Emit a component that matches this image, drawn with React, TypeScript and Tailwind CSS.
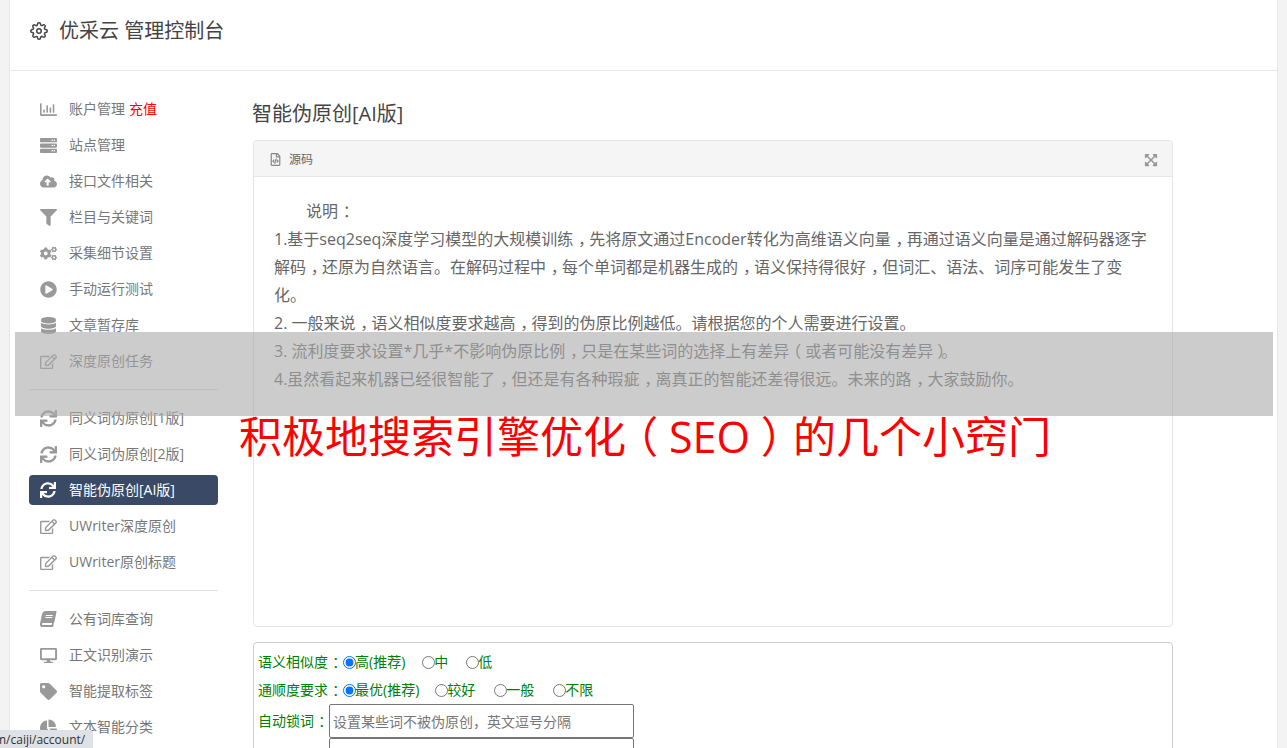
import { FiSettings } from 'react-icons/fi';
import {
    FaBook,
    FaChartPie,
    FaCloudUploadAlt,
    FaCogs,
    FaDatabase,
    FaDesktop,
    FaExpandArrowsAlt,
    FaFilter,
    FaPlayCircle,
    FaRegChartBar,
    FaRegEdit,
    FaRegFileCode,
    FaServer,
    FaSync,
    FaTag,
} from 'react-icons/fa';

type Item = {
    icon: React.ComponentType<{ className?: string }>;
    label: string;
    extra?: string;
    active?: boolean;
    slant?: boolean;
};

const groupOne: Item[] = [
    { icon: FaRegChartBar, label: '账户管理', extra: '充值' },
    { icon: FaServer, label: '站点管理' },
    { icon: FaCloudUploadAlt, label: '接口文件相关' },
    { icon: FaFilter, label: '栏目与关键词' },
    { icon: FaCogs, label: '采集细节设置' },
    { icon: FaPlayCircle, label: '手动运行测试' },
    { icon: FaDatabase, label: '文章暂存库' },
    { icon: FaRegEdit, label: '深度原创任务' },
];

const groupTwo: Item[] = [
    { icon: FaSync, label: '同义词伪原创[1版]' },
    { icon: FaSync, label: '同义词伪原创[2版]' },
    { icon: FaSync, label: '智能伪原创[AI版]', active: true },
    { icon: FaRegEdit, label: 'UWriter深度原创' },
    { icon: FaRegEdit, label: 'UWriter原创标题' },
];

const groupThree: Item[] = [
    { icon: FaBook, label: '公有词库查询', slant: true },
    { icon: FaDesktop, label: '正文识别演示' },
    { icon: FaTag, label: '智能提取标签' },
    { icon: FaChartPie, label: '文本智能分类' },
];

// Noto pushes these marks to one side of the em box, the reference centres them
function Cn({ text }: { text: string }) {
    return (
        <>
            {text.split(/([，：（）])/).map((part, i) => {
                if (part === '，' || part === '：') {
                    return (
                        <span key={i} className="ml-[0.3em] mr-[-0.3em]">
                            {part}
                        </span>
                    );
                }
                if (part === '（') {
                    return (
                        <span key={i} className="ml-[-0.25em] mr-[0.25em]">
                            {part}
                        </span>
                    );
                }
                if (part === '）') {
                    return (
                        <span key={i} className="ml-[0.25em] mr-[-0.25em]">
                            {part}
                        </span>
                    );
                }
                return part;
            })}
        </>
    );
}

function NavItem({ item }: { item: Item }) {
    const Icon = item.icon;
    if (item.active) {
        return (
            <div className="my-[3px] flex h-[30px] items-center rounded-[4px] bg-[#3a4a66] pl-[11px] text-white">
                <span className="flex w-[29px] shrink-0 justify-start">
                    <Icon className="h-[16px] w-[16px]" />
                </span>
                <span>{item.label}</span>
            </div>
        );
    }
    return (
        <div className="flex h-[36px] items-center pl-[11px] text-[#777]">
            <span className="flex w-[29px] shrink-0 justify-start">
                <Icon className={item.slant ? 'h-[16px] w-[16px] -skew-x-12 text-[#999]' : 'h-[17px] w-[17px] text-[#999]'} />
            </span>
            <span>{item.label}</span>
            {item.extra && <span className="ml-1 text-[#f00]">{item.extra}</span>}
        </div>
    );
}

function Radio({ label, checked, name, gap }: { label: string; checked?: boolean; name: string; gap: string }) {
    return (
        <label className={`inline-flex items-center ${gap}`}>
            <input type="radio" name={name} defaultChecked={checked} className="m-0 mr-[-1px] h-[13px] w-[13px]" />
            <span>{label}</span>
        </label>
    );
}

export default function App() {
    return (
        <div className="relative h-[748px] overflow-hidden bg-[#f3f3f3] font-['Open_Sans','Noto_Sans_CJK_SC',sans-serif] text-sm">
            <div className="mx-[9px] h-full border-x border-[#e7e7e7] bg-white">
                <header className="flex h-[71px] items-center border-b border-[#e7e7e7] pb-[8px] pl-[20px]">
                    <FiSettings className="mr-[11px] h-[18px] w-[18px] text-[#444]" />
                    <span className="text-[20px] text-[#444]">优采云 管理控制台</span>
                </header>
                <div className="flex">
                    <aside className="ml-[19px] mt-[20px] w-[189px] shrink-0">
                        {groupOne.map((item) => (
                            <NavItem key={item.label} item={item} />
                        ))}
                        <div className="my-[10px] border-t border-[#e0e0e0]" />
                        {groupTwo.map((item) => (
                            <NavItem key={item.label} item={item} />
                        ))}
                        <div className="my-[10px] border-t border-[#e0e0e0]" />
                        {groupThree.map((item) => (
                            <NavItem key={item.label} item={item} />
                        ))}
                    </aside>
                    <main className="ml-[35px] w-[920px] shrink-0">
                        <h1 className="ml-[-1px] mt-[29px] h-[40px] text-[20px] leading-[28px] text-[#444]">智能伪原创[AI版]</h1>
                        <section className="h-[487px] rounded-[4px] border border-[#e4e4e4]">
                            <div className="flex h-[36px] items-center justify-between rounded-t-[4px] border-b border-[#e7e7e7] bg-[#f5f5f5] pl-[16px] pr-[14px] pt-[2px] text-[12px] text-[#666]">
                                <div className="flex items-center gap-[8px]">
                                    <FaRegFileCode className="h-[13px] w-[11px] text-[#888]" />
                                    <span>源码</span>
                                </div>
                                <FaExpandArrowsAlt className="h-[14px] w-[14px] text-[#999]" />
                            </div>
                            <div className="whitespace-nowrap px-[20px] pt-[20px] text-[16px] leading-[28px] text-[#666]">
                                <div className="pl-[32px]">
                                    <Cn text="说明：" />
                                </div>
                                <div>
                                    <Cn text="1.基于seq2seq深度学习模型的大规模训练，先将原文通过Encoder转化为高维语义向量，再通过语义向量是通过解码器逐字" />
                                </div>
                                <div>
                                    <Cn text="解码，还原为自然语言。在解码过程中，每个单词都是机器生成的，语义保持得很好，但词汇、语法、词序可能发生了变" />
                                </div>
                                <div>化。</div>
                                <div>
                                    <Cn text="2. 一般来说，语义相似度要求越高，得到的伪原比例越低。请根据您的个人需要进行设置。" />
                                </div>
                                <div>
                                    <Cn text="3. 流利度要求设置*几乎*不影响伪原比例，只是在某些词的选择上有差异（或者可能没有差异）。" />
                                </div>
                                <div>
                                    <Cn text="4.虽然看起来机器已经很智能了，但还是有各种瑕疵，离真正的智能还差得很远。未来的路，大家鼓励你。" />
                                </div>
                            </div>
                        </section>
                        <section className="mt-[15px] h-[140px] rounded-[4px] border border-[#ccc] pl-[4px] pt-[5px] text-[#008000]">
                            <div className="flex h-[28px] items-center whitespace-nowrap">
                                <span className="w-[85px]">
                                    <Cn text="语义相似度：" />
                                </span>
                                <Radio name="sim" label="高(推荐)" checked gap="mr-[17px]" />
                                <Radio name="sim" label="中" gap="mr-[18px]" />
                                <Radio name="sim" label="低" gap="" />
                            </div>
                            <div className="flex h-[28px] items-center whitespace-nowrap">
                                <span className="w-[85px]">
                                    <Cn text="通顺度要求：" />
                                </span>
                                <Radio name="flu" label="最优(推荐)" checked gap="mr-[16px]" />
                                <Radio name="flu" label="较好" gap="mr-[19px]" />
                                <Radio name="flu" label="一般" gap="mr-[19px]" />
                                <Radio name="flu" label="不限" gap="" />
                            </div>
                            <div className="flex whitespace-nowrap">
                                <span className="w-[71px] pt-[7px]">
                                    <Cn text="自动锁词：" />
                                </span>
                                <div className="flex flex-col">
                                    <input
                                        placeholder="设置某些词不被伪原创，英文逗号分隔"
                                        className="h-[34px] w-[305px] rounded-[2px] border border-[#767676] px-[3px] text-sm placeholder:text-[#777]"
                                    />
                                    <input className="h-[34px] w-[305px] rounded-[2px] border border-[#767676] px-[3px]" />
                                </div>
                            </div>
                        </section>
                    </main>
                </div>
            </div>

            {/* Ad banner over the page */}
            <div className="absolute left-[15px] top-[332px] h-[84px] w-[1258px] bg-[#aaa]/60" />
            <div className="absolute left-[239px] top-[408px] whitespace-nowrap text-[43px] leading-[58px] text-[#f00]">
                <Cn text="积极地搜索引擎优化（SEO）的几个小窍门" />
            </div>

            {/* Browser status bubble */}
            <div className="absolute bottom-0 left-0 h-[18px] w-[93px] overflow-hidden rounded-tr-[3px] bg-[#dee1e6] text-[12px] leading-[19px] text-[#333]">
                <span className="ml-[-5px]">m/caiji/account/</span>
            </div>
        </div>
    );
}
